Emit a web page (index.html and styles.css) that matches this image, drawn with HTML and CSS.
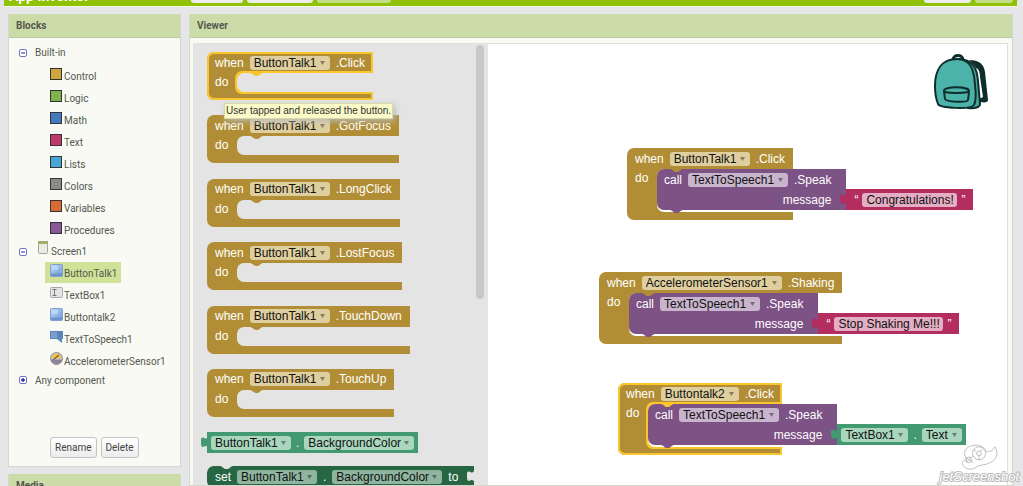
FILE: index.html
```html
<!DOCTYPE html>
<html lang="en">
<head>
<meta charset="utf-8">
<title>App Inventor – Blocks</title>
<link rel="stylesheet" href="styles.css">
</head>
<body>
<svg class="defs" width="0" height="0" aria-hidden="true">
  <defs>
    <linearGradient id="blue" x1="0" y1="0" x2="1" y2="1"><stop offset="0" stop-color="#c3dcf8"/><stop offset="1" stop-color="#6797d8"/></linearGradient>
    <symbol id="i-button" viewBox="0 0 13 13"><rect x="0.5" y="0.5" width="12" height="12" rx="1" fill="url(#blue)" stroke="#7f9fce"/><path d="M1 9.5h11V12H1z" fill="#6d93cb"/><path d="M2 2h6v4H2z" fill="#c9e0fa" opacity=".6"/></symbol>
    <symbol id="i-textbox" viewBox="0 0 13 13"><rect x="0.5" y="1.5" width="12" height="10" rx="1" fill="#e4e4e6" stroke="#a9a9ad"/><path d="M2.500 3.500h4M4.500 3.500v6M2.500 9.500h4" stroke="#77777d" fill="none"/></symbol>
    <symbol id="i-speech" viewBox="0 0 13 13"><path d="M0 1h13v8h-1v4L7 9H0z" fill="#5b86bd"/><path d="M1 2h6v6H1z" fill="#87abd6" opacity=".7"/></symbol>
    <symbol id="i-accel" viewBox="0 0 13 13"><circle cx="6.500" cy="6.500" r="6" fill="#cfcbd2" stroke="#8b8790"/><path d="M1.500 6.500a5 5 0 0 1 10 0z" fill="#f1c64a"/><path d="M3 8l6-5" stroke="#7a6248" stroke-width="1.500"/><path d="M1 7.500h11c-1 6-10 6-11 0z" fill="#8c8299"/></symbol>
    <symbol id="i-screen" viewBox="0 0 10 13"><rect x="0.500" y="0.500" width="9" height="12" rx="1" fill="#e9ebe4" stroke="#a3a898"/><path d="M0 0h10v3H0z" fill="#9fae6b"/></symbol>
    <symbol id="i-minus" viewBox="0 0 8 8"><rect x="0.500" y="0.500" width="7" height="7" rx="1.500" fill="#fff" stroke="#7474c4"/><path d="M2 4h4" stroke="#2222a8"/></symbol>
    <symbol id="i-plus" viewBox="0 0 8 8"><rect x="0.500" y="0.500" width="7" height="7" rx="1.500" fill="#fff" stroke="#7474c4"/><path d="M2 4h4M4 2v4" stroke="#2222a8" stroke-width="1.300"/></symbol>
    <symbol id="i-notch" viewBox="0 0 15 4"><path d="M0 0h15c-2 0-3 .6-4 1.500-1.600 2-5.400 2-7 0C3 .6 2 0 0 0z" fill="currentColor"/></symbol>
    <symbol id="i-tab" viewBox="0 0 7 14"><path d="M7 2C5 5 4 3 2 2.500 0 2.500 0 3.500 0 7s.3 5 2 5c2-1 3-1.500 5 0z" fill="currentColor"/></symbol>
  </defs>
</svg>

<header class="topbar">
  <span class="brand">App Inventor</span>
  <nav class="top-left"><button class="b1" aria-label="Screen"></button><button class="b2" aria-label="Add screen"></button><button class="b3" aria-label="Remove screen"></button></nav>
  <nav class="top-right"><button class="b4" aria-label="Designer"></button><button class="b5" aria-label="Blocks"></button></nav>
</header>

<main class="layout">
  <aside class="side">
    <section class="panel">
      <h2>Blocks</h2>
      <div class="panel-body">
        <div class="root"><svg class="toggle"><use href="#i-minus"/></svg>Built-in</div>
        <ul class="tree">
          <li><i class="swatch control"></i>Control</li>
          <li><i class="swatch logic"></i>Logic</li>
          <li><i class="swatch math"></i>Math</li>
          <li><i class="swatch text"></i>Text</li>
          <li><i class="swatch lists"></i>Lists</li>
          <li><i class="swatch colors"></i>Colors</li>
          <li><i class="swatch variables"></i>Variables</li>
          <li><i class="swatch procedures"></i>Procedures</li>
        </ul>
        <div class="root screen"><svg class="toggle"><use href="#i-minus"/></svg><svg class="phone"><use href="#i-screen"/></svg>Screen1</div>
        <ul class="tree">
          <li class="selected"><svg class="icon"><use href="#i-button"/></svg>ButtonTalk1</li>
          <li><svg class="icon"><use href="#i-textbox"/></svg>TextBox1</li>
          <li><svg class="icon"><use href="#i-button"/></svg>Buttontalk2</li>
          <li><svg class="icon"><use href="#i-speech"/></svg>TextToSpeech1</li>
          <li><svg class="icon"><use href="#i-accel"/></svg>AccelerometerSensor1</li>
        </ul>
        <div class="root last"><svg class="toggle"><use href="#i-plus"/></svg>Any component</div>
        <div class="actions"><button>Rename</button><button>Delete</button></div>
      </div>
    </section>
    <section class="panel"><h2>Media</h2></section>
  </aside>

  <section class="panel viewer">
    <h2>Viewer</h2>
    <div class="viewer-body">
      <div class="canvas">
        <div class="flyout">
          <div class="events">
            <div class="event active">
              <div class="row">when <select aria-label="Component"><option>ButtonTalk1</option></select> .Click</div>
              <div class="do"><span>do</span><div class="mouth"><svg class="notch"><use href="#i-notch"/></svg></div></div>
              <div class="tooltip" role="tooltip">User tapped and released the button.</div>
            </div>
            <div class="event">
              <div class="row">when <select aria-label="Component"><option>ButtonTalk1</option></select> .GotFocus</div>
              <div class="do"><span>do</span><div class="mouth"><svg class="notch"><use href="#i-notch"/></svg></div></div>
            </div>
            <div class="event">
              <div class="row">when <select aria-label="Component"><option>ButtonTalk1</option></select> .LongClick</div>
              <div class="do"><span>do</span><div class="mouth"><svg class="notch"><use href="#i-notch"/></svg></div></div>
            </div>
            <div class="event">
              <div class="row">when <select aria-label="Component"><option>ButtonTalk1</option></select> .LostFocus</div>
              <div class="do"><span>do</span><div class="mouth"><svg class="notch"><use href="#i-notch"/></svg></div></div>
            </div>
            <div class="event">
              <div class="row">when <select aria-label="Component"><option>ButtonTalk1</option></select> .TouchDown</div>
              <div class="do"><span>do</span><div class="mouth"><svg class="notch"><use href="#i-notch"/></svg></div></div>
            </div>
            <div class="event">
              <div class="row">when <select aria-label="Component"><option>ButtonTalk1</option></select> .TouchUp</div>
              <div class="do"><span>do</span><div class="mouth"><svg class="notch"><use href="#i-notch"/></svg></div></div>
            </div>
          </div>
          <div class="value getter"><svg class="tab"><use href="#i-tab"/></svg><select aria-label="Component"><option>ButtonTalk1</option></select>.<select aria-label="Property"><option>BackgroundColor</option></select></div>
          <div class="setter"><svg class="notch"><use href="#i-notch"/></svg>set <select aria-label="Component"><option>ButtonTalk1</option></select>.<select aria-label="Property"><option>BackgroundColor</option></select> to<svg class="socket"><use href="#i-tab"/></svg></div>
          <div class="thumb"></div>
        </div>

        <div class="event placed one">
          <div class="row">when <select aria-label="Component"><option>ButtonTalk1</option></select> .Click</div>
          <div class="do"><span>do</span><div class="mouth"><svg class="notch"><use href="#i-notch"/></svg>
            <div class="call">
              <div class="row">call <select aria-label="Component"><option>TextToSpeech1</option></select> .Speak</div>
              <div class="row arg">message</div>
              <svg class="bump"><use href="#i-notch"/></svg>
            </div>
            <div class="value string"><svg class="tab"><use href="#i-tab"/></svg><b>“</b><input class="w-short" aria-label="Message" value="Congratulations!"><b>”</b></div>
          </div></div>
        </div>

        <div class="event placed two">
          <div class="row">when <select aria-label="Component"><option>AccelerometerSensor1</option></select> .Shaking</div>
          <div class="do"><span>do</span><div class="mouth"><svg class="notch"><use href="#i-notch"/></svg>
            <div class="call">
              <div class="row">call <select aria-label="Component"><option>TextToSpeech1</option></select> .Speak</div>
              <div class="row arg">message</div>
              <svg class="bump"><use href="#i-notch"/></svg>
            </div>
            <div class="value string"><svg class="tab"><use href="#i-tab"/></svg><b>“</b><input class="w-long" aria-label="Message" value="Stop Shaking Me!!!"><b>”</b></div>
          </div></div>
        </div>

        <div class="event placed three active">
          <div class="row">when <select aria-label="Component"><option>Buttontalk2</option></select> .Click</div>
          <div class="do"><span>do</span><div class="mouth"><svg class="notch"><use href="#i-notch"/></svg>
            <div class="call">
              <div class="row">call <select aria-label="Component"><option>TextToSpeech1</option></select> .Speak</div>
              <div class="row arg">message</div>
              <svg class="bump"><use href="#i-notch"/></svg>
            </div>
            <div class="value getter"><svg class="tab"><use href="#i-tab"/></svg><select aria-label="Component"><option>TextBox1</option></select>.<select aria-label="Property"><option>Text</option></select></div>
          </div></div>
        </div>

        <svg class="backpack" viewBox="0 0 56 58" role="img" aria-label="Backpack">
          <path d="M36 7c10 0 15 4 16 12l3 28c0 2-2 3-8 2l-1-4c2 0 4 0 3-3L46 22c0-5-4-9-10-15z" fill="#0e2e2b"/>
          <path d="M44 15c2 2 3 5 3 9l3 20-4 2z" fill="#fff"/>
          <path d="M20 7c0-6 10-6 10 0" fill="none" stroke="#0e2e2b" stroke-width="3"/>
          <path d="M26 6c14 1 18 9 19 22l2 23c0 3-5 5-12 4z" fill="#45a89f" stroke="#0e2e2b" stroke-width="2"/>
          <path d="M24 6C8 6 2 18 2 33c0 8 1 13 3 18 2 4 32 6 36 1 2-4 2-12 1-20C41 17 38 6 24 6z" fill="#4bb3a9" stroke="#0e2e2b" stroke-width="2"/>
          <path d="M11 38c-1-5 25-5 25 0 0 3-1 8-1 9-1 3-22 2-23-1z" fill="#4bb3a9" stroke="#0e2e2b" stroke-width="2"/>
          <path d="M11 39c7 1 18 1 25 0" fill="none" stroke="#0e2e2b" stroke-width="2"/>
        </svg>
      </div>
    </div>
  </section>
</main>

<div class="watermark">
  <svg viewBox="0 0 44 30" aria-hidden="true"><g fill="#fff" fill-opacity=".6" stroke="#aaa" stroke-width=".8"><path d="M11 3C20-1 28 3 30 8c3 1 7-1 9-5 4 6 3 13-5 17-5 3-11 2-14 4-6 6-15 2-16-3 0-3 3-4 5-4C5 11 6 6 11 3z"/><circle cx="22" cy="10" r="7"/><circle cx="22" cy="10" r="2.500"/><circle cx="11" cy="17" r="3"/><path d="M7 14l9 6M8 20l7-7M16 6l3 2M26 6l-3 2M22 17v-4"/></g></svg>
  <span>jetScreenshot</span>
</div>
</body>
</html>
```
FILE: styles.css
```css
* { box-sizing: border-box; }
body {
  margin: 0;
  height: 100vh;
  overflow: hidden;
  display: flex;
  flex-direction: column;
  position: relative;
  background: #e6e6e8;
  font-family: Roboto, "Liberation Sans", sans-serif;
  font-size: 10px;
  color: #55584f;
}
svg { display: block; flex: none; }
.defs { position: absolute; }

.topbar {
  display: flex;
  flex: none;
  height: 7px;
  margin: 0 6px 7px 4px;
  background: #90c104;
  border-bottom: 1px solid #f4f8e8;
  overflow: hidden;
  align-items: flex-start;
}
.brand { width: 187px; margin-top: -4px; padding-left: 5px; line-height: 0; font-size: 14px; font-weight: 700; color: #fff; }
.topbar nav { display: flex; gap: 4px; }
.topbar button { height: 3px; padding: 0; border: 0; border-radius: 0 0 3px 3px; background: #ededed; }
.top-right { margin-left: auto; padding-right: 4px; }
.b1 { width: 52px; }
.b2 { width: 66px; }
.topbar .b3 { width: 74px; background: #c5dc86; }
.b4 { width: 47px; }
.topbar .b5 { width: 38px; background: #c5dc86; }

.layout { display: flex; flex: 1; gap: 8px; padding: 0 10px 0 8px; min-height: 0; }
.side { width: 173px; flex: none; display: flex; flex-direction: column; gap: 7px; }
.panel { background: #f8faf3; border: 1px solid #d5d9cd; border-top: 0; }
.panel h2 {
  margin: 0;
  height: 24px;
  padding-left: 7px;
  line-height: 24px;
  font-size: 10px;
  font-weight: 700;
  background: #cbdca9;
  border-bottom: 1px solid #b9caa0;
}
.panel-body { padding: 4px 0 8px 10px; }
.root { display: flex; align-items: center; height: 21px; }
.root.last { height: 16px; }
.toggle { width: 8px; height: 8px; margin-right: 8px; }
.screen .toggle { margin-right: 11px; }
.phone { width: 10px; height: 13px; margin-right: 3px; align-self: flex-start; }
.tree { list-style: none; margin: 0; padding: 0 0 0 26px; }
.root:first-child + .tree { padding-top: 2px; }
.tree li { display: flex; width: max-content; height: 21px; margin-bottom: 1px; padding: 0 4px 0 5px; line-height: 23px; gap: 1px; }
.selected { background: #cfe297; }
.icon { width: 13px; height: 13px; margin-top: 2px; }
.swatch { width: 12px; height: 12px; margin: 3px 1px 0 0; border: 1px solid #333; }
.control { background: #cfa53c; }
.logic { background: #7fb24a; }
.math { background: #4379bd; }
.swatch.text { background: #bf3b6b; }
.lists { background: #49a6d4; }
.colors { background: #8a8a8a; }
.variables { background: #d96a36; }
.procedures { background: #8a5797; }
.actions { display: flex; gap: 4px; padding: 49px 0 0 31px; }
.actions button {
  height: 21px;
  padding: 0 4px;
  font: inherit;
  color: #444;
  background: linear-gradient(#fff, #ececec);
  border: 1px solid #c4c4c4;
  border-radius: 3px;
}

.viewer { flex: 1; min-width: 0; display: flex; flex-direction: column; }
.viewer-body { flex: 1; min-height: 0; display: flex; padding: 5px 4px 0 3px; }
.canvas {
  flex: 1;
  position: relative;
  background: #fff;
  border: 1px solid #e0e0e0;
  border-bottom: 0;
  overflow: hidden;
  font: 12px "Liberation Sans", sans-serif;
  color: #fff;
}
.flyout { position: relative; width: 294px; height: 100%; padding: 8px 0 0 13px; background: #e4e4e4; overflow: hidden; --ground: #e4e4e4; }
.events { display: flex; flex-direction: column; justify-content: space-between; min-height: 365px; margin-bottom: 15px; }
.thumb { position: absolute; top: 1px; right: 4px; width: 8px; height: 254px; border-radius: 4px; background: #c9c9c9; }

.event {
  --edge: #b18e35;
  position: relative;
  width: max-content;
  padding-bottom: 8px;
  background: #b18e35;
  border-radius: 7px 0 0 7px;
  white-space: nowrap;
}
.event.active { --edge: #fbc62c; box-shadow: inset 0 0 0 2px var(--edge); }
.row { display: flex; align-items: center; gap: 6px; height: 21px; padding: 0 8px; }
.do { display: flex; width: 0; min-width: 100%; }
.do > span { width: 30px; flex: none; padding-left: 8px; line-height: 19px; }
.mouth {
  position: relative;
  display: flex;
  align-items: flex-start;
  flex: 1;
  min-width: 0;
  min-height: 19px;
  background: var(--ground, #fff);
  border-radius: 7px 0 0 7px;
}
.active .mouth { box-shadow: -2px -2px 0 var(--edge), -2px 2px 0 var(--edge), 0 2px 0 var(--edge); clip-path: inset(-2px -300px -6px -4px); }
.flyout .active .mouth { clip-path: inset(-2px 0 -2px -4px); }
.notch { position: absolute; z-index: 1; top: 0; left: 12px; width: 15px; height: 4px; color: var(--edge); }
.call { position: relative; flex: none; background: #7d5285; border-radius: 7px 0 0 7px; margin-bottom: 2px; }
.call .row { padding: 0 15px 0 7px; }
.call .arg { height: 20px; justify-content: flex-end; }
.bump { position: absolute; top: 100%; left: 12px; width: 15px; height: 4px; color: #7d5285; }

select, input {
  appearance: none;
  height: 14px;
  margin: 0;
  padding: 0 13px 0 4px;
  border: 0;
  border-radius: 3px;
  font: 12px/14px "Liberation Sans", sans-serif;
  color: #111;
  background: #dfcf9f url("data:image/svg+xml,%3Csvg xmlns='http://www.w3.org/2000/svg' width='5' height='4'%3E%3Cpath d='M0 0h5L2.5 4z' fill='%23000' fill-opacity='.4'/%3E%3C/svg%3E") no-repeat right 5px center;
}
.call select { background-color: #c9b4ce; }
.value {
  position: relative;
  display: flex;
  align-items: center;
  flex: none;
  gap: 5px;
  width: max-content;
  height: 21px;
  padding: 0 4px;
}
.mouth .value { margin-top: 20px; }
.getter { background: #439970; }
.getter select { background-color: #a9d6bd; }
.tab { position: absolute; top: 3px; left: -6px; width: 7px; height: 14px; color: #439970; }
.string { gap: 4px; background: #b32d5e; padding: 0 8px; }
.string .tab { color: #b32d5e; }
.string b { font-size: 12px; font-weight: 400; }
.string input { padding: 0 4px; background: #e4afc4; }
.w-short { width: 95px; }
.w-long { width: 109px; }
.setter {
  position: relative;
  display: flex;
  align-items: center;
  gap: 6px;
  width: max-content;
  height: 22px;
  margin-top: 13px;
  padding: 0 16px 0 8px;
  background: #266643;
  border-radius: 7px 0 0 7px;
}
.setter .notch { color: #e4e4e4; }
.setter select { background-color: #8fb5a0; }
.socket { position: absolute; right: 0; top: 3px; width: 7px; height: 14px; color: #e4e4e4; }

.tooltip {
  position: absolute;
  z-index: 3;
  top: 51px;
  left: 17px;
  height: 16px;
  padding: 0 1px;
  line-height: 14px;
  font-size: 10px;
  color: #333;
  background: #fbfbc9;
  border: 1px solid #d9d9ae;
  box-shadow: 2px 2px 6px #bbb;
}

.placed { position: absolute; }
.one { left: 433px; top: 104px; }
.two { left: 405px; top: 228px; }
.three { left: 424px; top: 339px; }
.backpack { position: absolute; right: 18px; top: 9px; width: 56px; height: 58px; }

.watermark { position: absolute; right: 4px; bottom: 2px; display: flex; flex-direction: column; align-items: center; }
.watermark svg { width: 44px; height: 28px; }
.watermark span {
  margin-top: -3px;
  font: italic 13px/15px "Liberation Sans", sans-serif;
  color: #fff;
  -webkit-text-stroke: 2px #bdbdbd;
  paint-order: stroke fill;
}
```
